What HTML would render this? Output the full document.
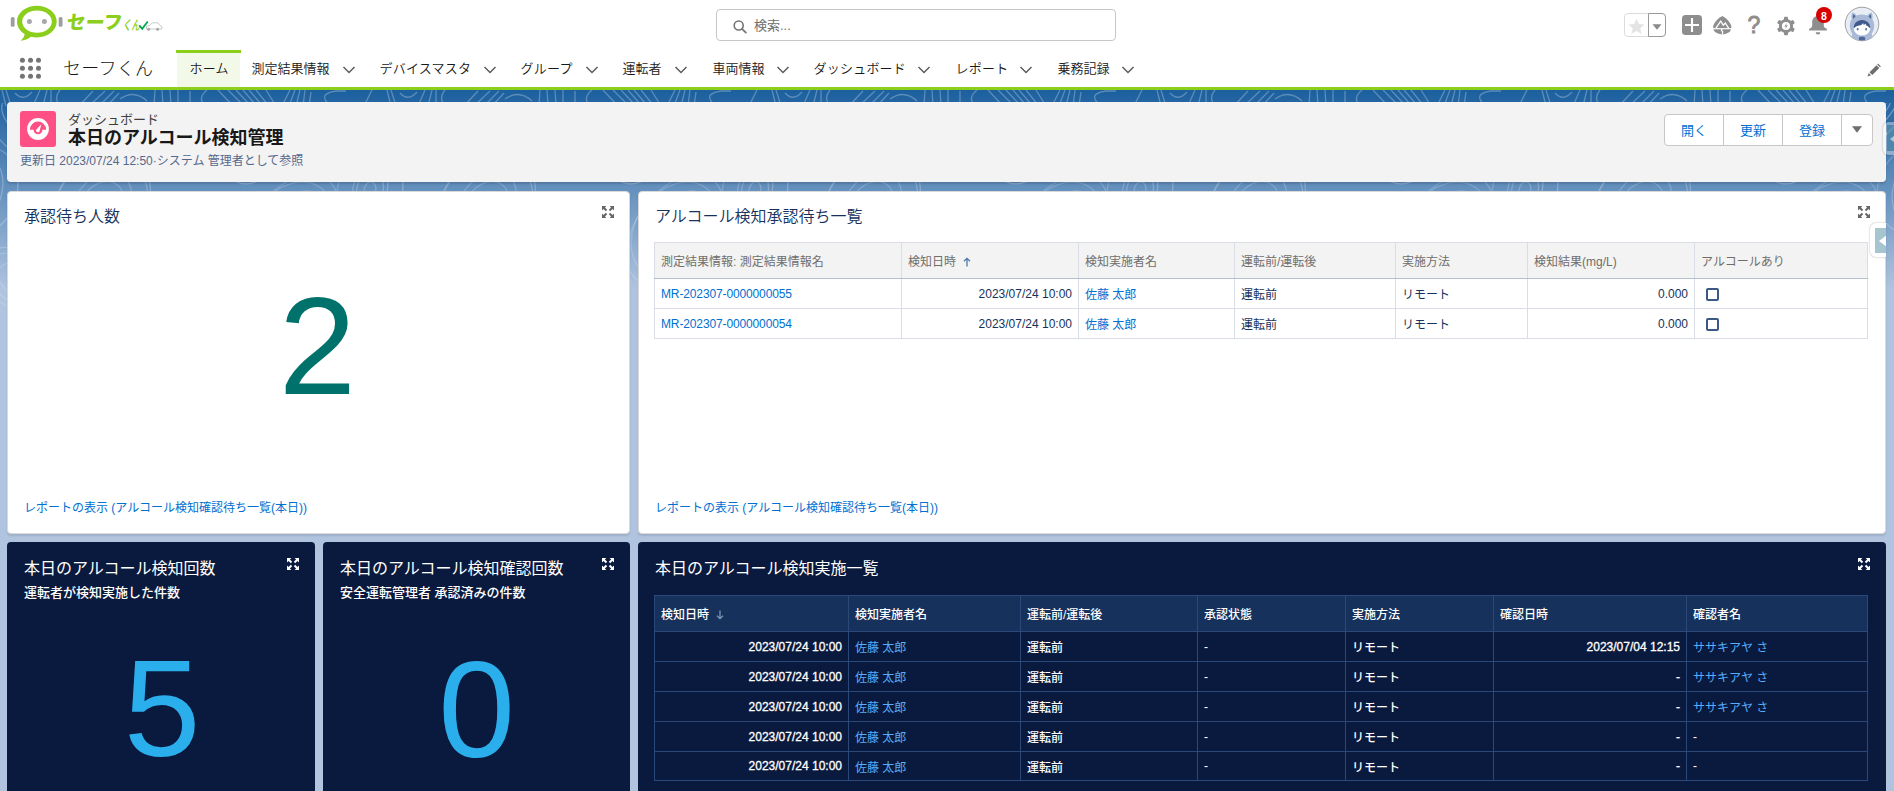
<!DOCTYPE html>
<html lang="ja">
<head>
<meta charset="utf-8">
<title>本日のアルコール検知管理</title>
<style>
*{box-sizing:border-box;margin:0;padding:0}
html,body{width:1894px;height:791px;overflow:hidden;background:#b0c4df}
body{font-family:"Liberation Sans","Noto Sans CJK JP",sans-serif;font-size:13px;color:#181818;position:relative}
.abs{position:absolute}
.t{position:absolute;white-space:nowrap;line-height:1}
#bg{position:absolute;left:0;top:90px;width:1894px;height:200px;background:linear-gradient(to top,rgba(176,196,223,0) 0,#1b5f9e 100%)}
#hdr{position:absolute;left:0;top:0;width:1894px;height:87px;background:#fff}
#gline{position:absolute;left:0;top:87px;width:1894px;height:3px;background:#8bcf1c}
.nav{font-size:13px;color:#181818;top:62px;font-weight:350;letter-spacing:.22px;margin-left:.5px}
.card{position:absolute;background:#fff;border-radius:4px;box-shadow:0 2px 2px rgba(0,0,0,.1)}
.dcard{position:absolute;background:#0a1a3e;border-radius:4px}
.ctitle{font-size:16px;color:#16325c;font-weight:350}
.dtitle{font-size:16px;color:#fff}
.dsub{font-size:13px;color:#fff;font-weight:500}
.link{color:#0070d2}
.foot{font-size:12px;color:#0070d2;margin-top:1px}
table{border-collapse:collapse;position:absolute;table-layout:fixed;font-size:12px}
td,th{border:1px solid #d8dde6;padding:0 6px;white-space:nowrap;overflow:hidden;text-align:left;font-weight:400;vertical-align:middle}
#t1 th{background:#f3f3f3;color:#706e6b;height:36px}
#t1 td{height:30px;color:#16325c}
#t1 th{border-bottom-color:#b3c1d3}
#t1 td.r,#t2 td.r{text-align:right}
#t1 a{color:#0070d2;text-decoration:none}
.mr{letter-spacing:-.13px}
#t2 tr:last-child td{height:29px}
#t2 td,#t2 th{border-color:#2a4878;color:#fff}
#t2 th{background:#16325c;height:36px;font-weight:500}
#t2 td{height:30px;font-weight:500}
#t2 a{color:#58aef8;text-decoration:none;font-weight:400}
#t2 td.r{-webkit-text-stroke:.3px #fff}
.cb{display:inline-block;width:13px;height:13px;border:2px solid #3a5a85;border-radius:2px;vertical-align:middle;margin-left:5px;background:#fff}
</style>
</head>
<body>
<div id="bg"></div>
<svg id="topo" class="abs" style="left:0;top:90px" width="1894" height="230" viewBox="0 0 1894 230">
<defs><linearGradient id="tg" x1="0" y1="0" x2="0" y2="230" gradientUnits="userSpaceOnUse"><stop offset="0" stop-color="#fff" stop-opacity=".32"/><stop offset=".5" stop-color="#fff" stop-opacity=".2"/><stop offset="1" stop-color="#fff" stop-opacity=".14"/></linearGradient>
<pattern id="tp" width="385" height="230" patternUnits="userSpaceOnUse"><clipPath id="tc"><rect x="0" y="13" width="385" height="217"/></clipPath><g clip-path="url(#tc)"><g fill="none" stroke="url(#tg)" stroke-width="1.300"><ellipse cx="-345.0" cy="30.0" rx="7.9" ry="4.5" transform="rotate(27 -345.0 30.0)"/><ellipse cx="40.0" cy="30.0" rx="7.9" ry="4.5" transform="rotate(27 40.0 30.0)"/><ellipse cx="425.0" cy="30.0" rx="7.9" ry="4.5" transform="rotate(27 425.0 30.0)"/><ellipse cx="-345.0" cy="30.0" rx="17.5" ry="11.2" transform="rotate(27 -345.0 30.0)"/><ellipse cx="40.0" cy="30.0" rx="17.5" ry="11.2" transform="rotate(27 40.0 30.0)"/><ellipse cx="425.0" cy="30.0" rx="17.5" ry="11.2" transform="rotate(27 425.0 30.0)"/><ellipse cx="-345.0" cy="30.0" rx="24.5" ry="16.6" transform="rotate(27 -345.0 30.0)"/><ellipse cx="40.0" cy="30.0" rx="24.5" ry="16.6" transform="rotate(27 40.0 30.0)"/><ellipse cx="425.0" cy="30.0" rx="24.5" ry="16.6" transform="rotate(27 425.0 30.0)"/><ellipse cx="-345.0" cy="30.0" rx="32.5" ry="21.4" transform="rotate(27 -345.0 30.0)"/><ellipse cx="40.0" cy="30.0" rx="32.5" ry="21.4" transform="rotate(27 40.0 30.0)"/><ellipse cx="425.0" cy="30.0" rx="32.5" ry="21.4" transform="rotate(27 425.0 30.0)"/><ellipse cx="-345.0" cy="30.0" rx="41.1" ry="23.5" transform="rotate(27 -345.0 30.0)"/><ellipse cx="40.0" cy="30.0" rx="41.1" ry="23.5" transform="rotate(27 40.0 30.0)"/><ellipse cx="425.0" cy="30.0" rx="41.1" ry="23.5" transform="rotate(27 425.0 30.0)"/><ellipse cx="-345.0" cy="30.0" rx="54.2" ry="41.0" transform="rotate(27 -345.0 30.0)"/><ellipse cx="40.0" cy="30.0" rx="54.2" ry="41.0" transform="rotate(27 40.0 30.0)"/><ellipse cx="425.0" cy="30.0" rx="54.2" ry="41.0" transform="rotate(27 425.0 30.0)"/><ellipse cx="-235.0" cy="-10.0" rx="6.7" ry="5.3" transform="rotate(40 -235.0 -10.0)"/><ellipse cx="150.0" cy="-10.0" rx="6.7" ry="5.3" transform="rotate(40 150.0 -10.0)"/><ellipse cx="535.0" cy="-10.0" rx="6.7" ry="5.3" transform="rotate(40 535.0 -10.0)"/><ellipse cx="-235.0" cy="-10.0" rx="15.3" ry="10.0" transform="rotate(40 -235.0 -10.0)"/><ellipse cx="150.0" cy="-10.0" rx="15.3" ry="10.0" transform="rotate(40 150.0 -10.0)"/><ellipse cx="535.0" cy="-10.0" rx="15.3" ry="10.0" transform="rotate(40 535.0 -10.0)"/><ellipse cx="-235.0" cy="-10.0" rx="25.8" ry="14.5" transform="rotate(40 -235.0 -10.0)"/><ellipse cx="150.0" cy="-10.0" rx="25.8" ry="14.5" transform="rotate(40 150.0 -10.0)"/><ellipse cx="535.0" cy="-10.0" rx="25.8" ry="14.5" transform="rotate(40 535.0 -10.0)"/><ellipse cx="-235.0" cy="-10.0" rx="34.5" ry="21.5" transform="rotate(40 -235.0 -10.0)"/><ellipse cx="150.0" cy="-10.0" rx="34.5" ry="21.5" transform="rotate(40 150.0 -10.0)"/><ellipse cx="535.0" cy="-10.0" rx="34.5" ry="21.5" transform="rotate(40 535.0 -10.0)"/><ellipse cx="-235.0" cy="-10.0" rx="36.9" ry="21.4" transform="rotate(40 -235.0 -10.0)"/><ellipse cx="150.0" cy="-10.0" rx="36.9" ry="21.4" transform="rotate(40 150.0 -10.0)"/><ellipse cx="535.0" cy="-10.0" rx="36.9" ry="21.4" transform="rotate(40 535.0 -10.0)"/><ellipse cx="-235.0" cy="-10.0" rx="46.4" ry="35.0" transform="rotate(40 -235.0 -10.0)"/><ellipse cx="150.0" cy="-10.0" rx="46.4" ry="35.0" transform="rotate(40 150.0 -10.0)"/><ellipse cx="535.0" cy="-10.0" rx="46.4" ry="35.0" transform="rotate(40 535.0 -10.0)"/><ellipse cx="-235.0" cy="-10.0" rx="52.5" ry="36.5" transform="rotate(40 -235.0 -10.0)"/><ellipse cx="150.0" cy="-10.0" rx="52.5" ry="36.5" transform="rotate(40 150.0 -10.0)"/><ellipse cx="535.0" cy="-10.0" rx="52.5" ry="36.5" transform="rotate(40 535.0 -10.0)"/><ellipse cx="-150.0" cy="45.0" rx="9.8" ry="5.6" transform="rotate(67 -150.0 45.0)"/><ellipse cx="235.0" cy="45.0" rx="9.8" ry="5.6" transform="rotate(67 235.0 45.0)"/><ellipse cx="620.0" cy="45.0" rx="9.8" ry="5.6" transform="rotate(67 620.0 45.0)"/><ellipse cx="-150.0" cy="45.0" rx="19.0" ry="11.4" transform="rotate(67 -150.0 45.0)"/><ellipse cx="235.0" cy="45.0" rx="19.0" ry="11.4" transform="rotate(67 235.0 45.0)"/><ellipse cx="620.0" cy="45.0" rx="19.0" ry="11.4" transform="rotate(67 620.0 45.0)"/><ellipse cx="-150.0" cy="45.0" rx="31.9" ry="21.0" transform="rotate(67 -150.0 45.0)"/><ellipse cx="235.0" cy="45.0" rx="31.9" ry="21.0" transform="rotate(67 235.0 45.0)"/><ellipse cx="620.0" cy="45.0" rx="31.9" ry="21.0" transform="rotate(67 620.0 45.0)"/><ellipse cx="-150.0" cy="45.0" rx="39.7" ry="27.6" transform="rotate(67 -150.0 45.0)"/><ellipse cx="235.0" cy="45.0" rx="39.7" ry="27.6" transform="rotate(67 235.0 45.0)"/><ellipse cx="620.0" cy="45.0" rx="39.7" ry="27.6" transform="rotate(67 620.0 45.0)"/><ellipse cx="-150.0" cy="45.0" rx="51.3" ry="32.0" transform="rotate(67 -150.0 45.0)"/><ellipse cx="235.0" cy="45.0" rx="51.3" ry="32.0" transform="rotate(67 235.0 45.0)"/><ellipse cx="620.0" cy="45.0" rx="51.3" ry="32.0" transform="rotate(67 620.0 45.0)"/><ellipse cx="-55.0" cy="10.0" rx="10.8" ry="7.5" transform="rotate(126 -55.0 10.0)"/><ellipse cx="330.0" cy="10.0" rx="10.8" ry="7.5" transform="rotate(126 330.0 10.0)"/><ellipse cx="715.0" cy="10.0" rx="10.8" ry="7.5" transform="rotate(126 715.0 10.0)"/><ellipse cx="-55.0" cy="10.0" rx="20.3" ry="15.6" transform="rotate(126 -55.0 10.0)"/><ellipse cx="330.0" cy="10.0" rx="20.3" ry="15.6" transform="rotate(126 330.0 10.0)"/><ellipse cx="715.0" cy="10.0" rx="20.3" ry="15.6" transform="rotate(126 715.0 10.0)"/><ellipse cx="-55.0" cy="10.0" rx="30.9" ry="19.2" transform="rotate(126 -55.0 10.0)"/><ellipse cx="330.0" cy="10.0" rx="30.9" ry="19.2" transform="rotate(126 330.0 10.0)"/><ellipse cx="715.0" cy="10.0" rx="30.9" ry="19.2" transform="rotate(126 715.0 10.0)"/><ellipse cx="-55.0" cy="10.0" rx="43.0" ry="24.9" transform="rotate(126 -55.0 10.0)"/><ellipse cx="330.0" cy="10.0" rx="43.0" ry="24.9" transform="rotate(126 330.0 10.0)"/><ellipse cx="715.0" cy="10.0" rx="43.0" ry="24.9" transform="rotate(126 715.0 10.0)"/><ellipse cx="-55.0" cy="10.0" rx="47.7" ry="35.3" transform="rotate(126 -55.0 10.0)"/><ellipse cx="330.0" cy="10.0" rx="47.7" ry="35.3" transform="rotate(126 330.0 10.0)"/><ellipse cx="715.0" cy="10.0" rx="47.7" ry="35.3" transform="rotate(126 715.0 10.0)"/><ellipse cx="-55.0" cy="10.0" rx="53.3" ry="35.8" transform="rotate(126 -55.0 10.0)"/><ellipse cx="330.0" cy="10.0" rx="53.3" ry="35.8" transform="rotate(126 330.0 10.0)"/><ellipse cx="715.0" cy="10.0" rx="53.3" ry="35.8" transform="rotate(126 715.0 10.0)"/><ellipse cx="-285.0" cy="120.0" rx="6.2" ry="4.3" transform="rotate(120 -285.0 120.0)"/><ellipse cx="100.0" cy="120.0" rx="6.2" ry="4.3" transform="rotate(120 100.0 120.0)"/><ellipse cx="485.0" cy="120.0" rx="6.2" ry="4.3" transform="rotate(120 485.0 120.0)"/><ellipse cx="-285.0" cy="120.0" rx="19.0" ry="12.0" transform="rotate(120 -285.0 120.0)"/><ellipse cx="100.0" cy="120.0" rx="19.0" ry="12.0" transform="rotate(120 100.0 120.0)"/><ellipse cx="485.0" cy="120.0" rx="19.0" ry="12.0" transform="rotate(120 485.0 120.0)"/><ellipse cx="-285.0" cy="120.0" rx="30.6" ry="21.4" transform="rotate(120 -285.0 120.0)"/><ellipse cx="100.0" cy="120.0" rx="30.6" ry="21.4" transform="rotate(120 100.0 120.0)"/><ellipse cx="485.0" cy="120.0" rx="30.6" ry="21.4" transform="rotate(120 485.0 120.0)"/><ellipse cx="-285.0" cy="120.0" rx="41.7" ry="27.7" transform="rotate(120 -285.0 120.0)"/><ellipse cx="100.0" cy="120.0" rx="41.7" ry="27.7" transform="rotate(120 100.0 120.0)"/><ellipse cx="485.0" cy="120.0" rx="41.7" ry="27.7" transform="rotate(120 485.0 120.0)"/><ellipse cx="-285.0" cy="120.0" rx="56.9" ry="44.8" transform="rotate(120 -285.0 120.0)"/><ellipse cx="100.0" cy="120.0" rx="56.9" ry="44.8" transform="rotate(120 100.0 120.0)"/><ellipse cx="485.0" cy="120.0" rx="56.9" ry="44.8" transform="rotate(120 485.0 120.0)"/><ellipse cx="-285.0" cy="120.0" rx="63.6" ry="45.5" transform="rotate(120 -285.0 120.0)"/><ellipse cx="100.0" cy="120.0" rx="63.6" ry="45.5" transform="rotate(120 100.0 120.0)"/><ellipse cx="485.0" cy="120.0" rx="63.6" ry="45.5" transform="rotate(120 485.0 120.0)"/><ellipse cx="-95.0" cy="140.0" rx="6.4" ry="5.1" transform="rotate(126 -95.0 140.0)"/><ellipse cx="290.0" cy="140.0" rx="6.4" ry="5.1" transform="rotate(126 290.0 140.0)"/><ellipse cx="675.0" cy="140.0" rx="6.4" ry="5.1" transform="rotate(126 675.0 140.0)"/><ellipse cx="-95.0" cy="140.0" rx="17.8" ry="11.1" transform="rotate(126 -95.0 140.0)"/><ellipse cx="290.0" cy="140.0" rx="17.8" ry="11.1" transform="rotate(126 290.0 140.0)"/><ellipse cx="675.0" cy="140.0" rx="17.8" ry="11.1" transform="rotate(126 675.0 140.0)"/><ellipse cx="-95.0" cy="140.0" rx="26.7" ry="19.1" transform="rotate(126 -95.0 140.0)"/><ellipse cx="290.0" cy="140.0" rx="26.7" ry="19.1" transform="rotate(126 290.0 140.0)"/><ellipse cx="675.0" cy="140.0" rx="26.7" ry="19.1" transform="rotate(126 675.0 140.0)"/><ellipse cx="-95.0" cy="140.0" rx="33.6" ry="22.3" transform="rotate(126 -95.0 140.0)"/><ellipse cx="290.0" cy="140.0" rx="33.6" ry="22.3" transform="rotate(126 290.0 140.0)"/><ellipse cx="675.0" cy="140.0" rx="33.6" ry="22.3" transform="rotate(126 675.0 140.0)"/><ellipse cx="-95.0" cy="140.0" rx="44.4" ry="25.7" transform="rotate(126 -95.0 140.0)"/><ellipse cx="290.0" cy="140.0" rx="44.4" ry="25.7" transform="rotate(126 290.0 140.0)"/><ellipse cx="675.0" cy="140.0" rx="44.4" ry="25.7" transform="rotate(126 675.0 140.0)"/><ellipse cx="-95.0" cy="140.0" rx="52.2" ry="38.8" transform="rotate(126 -95.0 140.0)"/><ellipse cx="290.0" cy="140.0" rx="52.2" ry="38.8" transform="rotate(126 290.0 140.0)"/><ellipse cx="675.0" cy="140.0" rx="52.2" ry="38.8" transform="rotate(126 675.0 140.0)"/><ellipse cx="-95.0" cy="140.0" rx="62.7" ry="38.4" transform="rotate(126 -95.0 140.0)"/><ellipse cx="290.0" cy="140.0" rx="62.7" ry="38.4" transform="rotate(126 290.0 140.0)"/><ellipse cx="675.0" cy="140.0" rx="62.7" ry="38.4" transform="rotate(126 675.0 140.0)"/><ellipse cx="-195.0" cy="200.0" rx="8.3" ry="5.5" transform="rotate(157 -195.0 200.0)"/><ellipse cx="190.0" cy="200.0" rx="8.3" ry="5.5" transform="rotate(157 190.0 200.0)"/><ellipse cx="575.0" cy="200.0" rx="8.3" ry="5.5" transform="rotate(157 575.0 200.0)"/><ellipse cx="-195.0" cy="200.0" rx="21.1" ry="16.3" transform="rotate(157 -195.0 200.0)"/><ellipse cx="190.0" cy="200.0" rx="21.1" ry="16.3" transform="rotate(157 190.0 200.0)"/><ellipse cx="575.0" cy="200.0" rx="21.1" ry="16.3" transform="rotate(157 575.0 200.0)"/><ellipse cx="-195.0" cy="200.0" rx="35.8" ry="27.5" transform="rotate(157 -195.0 200.0)"/><ellipse cx="190.0" cy="200.0" rx="35.8" ry="27.5" transform="rotate(157 190.0 200.0)"/><ellipse cx="575.0" cy="200.0" rx="35.8" ry="27.5" transform="rotate(157 575.0 200.0)"/><ellipse cx="-195.0" cy="200.0" rx="43.8" ry="28.6" transform="rotate(157 -195.0 200.0)"/><ellipse cx="190.0" cy="200.0" rx="43.8" ry="28.6" transform="rotate(157 190.0 200.0)"/><ellipse cx="575.0" cy="200.0" rx="43.8" ry="28.6" transform="rotate(157 575.0 200.0)"/><ellipse cx="-195.0" cy="200.0" rx="56.7" ry="43.7" transform="rotate(157 -195.0 200.0)"/><ellipse cx="190.0" cy="200.0" rx="56.7" ry="43.7" transform="rotate(157 190.0 200.0)"/><ellipse cx="575.0" cy="200.0" rx="56.7" ry="43.7" transform="rotate(157 575.0 200.0)"/><ellipse cx="-365.0" cy="190.0" rx="11.7" ry="7.1" transform="rotate(27 -365.0 190.0)"/><ellipse cx="20.0" cy="190.0" rx="11.7" ry="7.1" transform="rotate(27 20.0 190.0)"/><ellipse cx="405.0" cy="190.0" rx="11.7" ry="7.1" transform="rotate(27 405.0 190.0)"/><ellipse cx="-365.0" cy="190.0" rx="23.4" ry="15.7" transform="rotate(27 -365.0 190.0)"/><ellipse cx="20.0" cy="190.0" rx="23.4" ry="15.7" transform="rotate(27 20.0 190.0)"/><ellipse cx="405.0" cy="190.0" rx="23.4" ry="15.7" transform="rotate(27 405.0 190.0)"/><ellipse cx="-365.0" cy="190.0" rx="37.6" ry="23.1" transform="rotate(27 -365.0 190.0)"/><ellipse cx="20.0" cy="190.0" rx="37.6" ry="23.1" transform="rotate(27 20.0 190.0)"/><ellipse cx="405.0" cy="190.0" rx="37.6" ry="23.1" transform="rotate(27 405.0 190.0)"/><ellipse cx="-365.0" cy="190.0" rx="44.2" ry="28.9" transform="rotate(27 -365.0 190.0)"/><ellipse cx="20.0" cy="190.0" rx="44.2" ry="28.9" transform="rotate(27 20.0 190.0)"/><ellipse cx="405.0" cy="190.0" rx="44.2" ry="28.9" transform="rotate(27 405.0 190.0)"/><ellipse cx="-15.0" cy="100.0" rx="8.2" ry="5.9" transform="rotate(102 -15.0 100.0)"/><ellipse cx="370.0" cy="100.0" rx="8.2" ry="5.9" transform="rotate(102 370.0 100.0)"/><ellipse cx="755.0" cy="100.0" rx="8.2" ry="5.9" transform="rotate(102 755.0 100.0)"/><ellipse cx="-15.0" cy="100.0" rx="18.8" ry="13.2" transform="rotate(102 -15.0 100.0)"/><ellipse cx="370.0" cy="100.0" rx="18.8" ry="13.2" transform="rotate(102 370.0 100.0)"/><ellipse cx="755.0" cy="100.0" rx="18.8" ry="13.2" transform="rotate(102 755.0 100.0)"/><ellipse cx="-15.0" cy="100.0" rx="30.3" ry="17.1" transform="rotate(102 -15.0 100.0)"/><ellipse cx="370.0" cy="100.0" rx="30.3" ry="17.1" transform="rotate(102 370.0 100.0)"/><ellipse cx="755.0" cy="100.0" rx="30.3" ry="17.1" transform="rotate(102 755.0 100.0)"/><ellipse cx="-15.0" cy="100.0" rx="43.3" ry="32.3" transform="rotate(102 -15.0 100.0)"/><ellipse cx="370.0" cy="100.0" rx="43.3" ry="32.3" transform="rotate(102 370.0 100.0)"/><ellipse cx="755.0" cy="100.0" rx="43.3" ry="32.3" transform="rotate(102 755.0 100.0)"/></g></g><g fill="none" stroke="#fff" stroke-opacity=".27" stroke-width="1.300"><path d="M2 0L6 16"/><path d="M6 0L11 16"/><path d="M15 3Q23 12 32 2"/><path d="M33 16L40 0"/><path d="M43 16L47 0"/><path d="M51 0V16"/><path d="M60 0Q53 8 60 16"/><path d="M79 16L93 1"/><path d="M89 16L105 1"/><path d="M99 16L114 1"/><path d="M107 16L119 3"/><path d="M120 9Q134 -1 147 11"/><path d="M155 0L154 16"/><path d="M162 0L163 16"/><path d="M170 0L171 16"/><path d="M178 0L178 16"/><path d="M190 1L190 16"/><path d="M207 0Q197 8 205 16"/><path d="M218 0L233 16"/><path d="M228 0L242 14"/><path d="M236 0L249 14"/><path d="M243 0L255 14"/><path d="M249 0L261 14"/><path d="M256 0L268 15"/><path d="M266 0L276 16"/><path d="M282 16L290 0"/><path d="M289 16L295 0"/><path d="M296 16L300 0"/><path d="M303 16L305 0"/><path d="M309 16L311 2"/><path d="M331 16Q316 4 336 1H346"/><path d="M364 16L372 0"/></g></pattern></defs>
<rect width="1894" height="230" fill="url(#tp)"/></svg>
<div id="hdr"></div>
<div id="gline"></div>

<!-- GLOBAL HEADER -->
<svg id="logo" class="abs" style="left:0;top:0" width="180" height="48" viewBox="0 0 180 48">
<rect x="10.8" y="17" width="3.8" height="9.8" rx="1.6" fill="#9b9ea0"/>
<rect x="58.7" y="17" width="3.8" height="9.8" rx="1.6" fill="#9b9ea0"/>
<path d="M36.8 5.7c-11 0-19.8 7-19.8 15.8 0 5.200 3 9.700 7.700 12.600-.5 2.600-2 5-4 6.600 3.700-.3 7.400-1.700 10.300-3.900 1.800.4 3.800.6 5.800.6 11 0 19.900-7.100 19.900-15.900S47.800 5.700 36.800 5.700z" fill="#8bcf1c"/>
<ellipse cx="37" cy="21.600" rx="14.800" ry="11.100" fill="#fff"/>
<circle cx="29.400" cy="21.600" r="2.500" fill="#a6a8ab"/>
<circle cx="44.400" cy="21.600" r="2.500" fill="#a6a8ab"/>
<text x="66" y="29.400" font-family="'Liberation Sans','Noto Sans CJK JP',sans-serif" font-weight="900" font-size="19" fill="#8bcf1c" textLength="56" lengthAdjust="spacingAndGlyphs" transform="skewX(-6) translate(3 0)">セーフ</text>
<text x="122.500" y="30" font-family="'Liberation Sans','Noto Sans CJK JP',sans-serif" font-weight="500" font-size="13.500" fill="#8bcf1c" textLength="17.500" lengthAdjust="spacingAndGlyphs" font-style="italic">くん</text>
<path d="M139.200 25.300l3 3.600 5.600-7.400" fill="none" stroke="#00a651" stroke-width="1.800"/>
<path d="M146.500 29v-2.800l3.200-.6 2.600-2.800h5.600l2.200 2.800 1.700.8v2.600z" fill="#fff" stroke="#b9bbbd" stroke-width=".8"/>
<circle cx="148.600" cy="29.200" r="1.500" fill="#a6a8ab"/><circle cx="157.600" cy="29.200" r="1.500" fill="#a6a8ab"/>
</svg>
<div id="search" class="abs" style="left:716px;top:9px;width:400px;height:32px;border:1px solid #c9c7c5;border-radius:4px;background:#fff"></div>
<div class="t" style="left:754px;top:19px;font-size:13px;color:#706e6b">検索...</div>
<div id="gicons">
<svg class="abs" style="left:732px;top:19px" width="16" height="16" viewBox="0 0 16 16"><circle cx="6.700" cy="6.500" r="4.500" fill="none" stroke="#747474" stroke-width="1.600"/><path d="M10 9.800l3.900 3.900" stroke="#747474" stroke-width="1.700" stroke-linecap="round"/></svg>
<div class="abs" style="left:1624px;top:13px;width:42px;height:24px;border:1px solid #dddbda;border-radius:4px;background:#fff"></div>
<div class="abs" style="left:1648px;top:13px;width:18px;height:24px;border:1px solid #9a9a9a;border-radius:0 4px 4px 0;background:#fff"></div>
<svg class="abs" style="left:1627.500px;top:17.800px" width="17" height="17" viewBox="0 0 16 16"><path d="M8 .6l2.200 5.100 5.400.4-4.100 3.600 1.300 5.400L8 12.200l-4.800 2.900 1.300-5.400L.4 6.100l5.400-.4z" fill="#e4e4e4"/></svg>
<svg class="abs" style="left:1652px;top:24px" width="10" height="6" viewBox="0 0 10 6"><path d="M.5 .3h9L5 5.700z" fill="#8a8a8a"/></svg>
<svg class="abs" style="left:1682px;top:15px" width="20" height="20" viewBox="0 0 20 20"><rect width="20" height="20" rx="3.500" fill="#8e8e8e"/><path d="M10 3v14M3 10h14" stroke="#fff" stroke-width="2.100"/></svg>
<svg class="abs" style="left:1712px;top:15px" width="20" height="20" viewBox="0 0 20 20"><path d="M10.300 .9C13.500 2.500 17.500 6 19.200 10.500 19.600 13 18.800 15.500 17.500 17 15 18.800 12.500 19.300 10.300 19.300 8 19.300 5.500 18.800 3 17 1.700 15.500 .9 13 1.300 10.500 3 6 7 2.500 10.300 .9z" fill="#8e8e8e"/><path d="M0 13.700h20" stroke="#fff" stroke-width="1.200"/><path d="M3.900 13.200l4.800-7 2.600 4 2-2.200 3.300 5.200" fill="none" stroke="#fff" stroke-width="1.300" stroke-linejoin="miter"/><path d="M10.200 14l-.8 1.500 1.300 1.300-.3 2.500" fill="none" stroke="#fff" stroke-width="1.200"/></svg>
<div class="t" style="left:1747.600px;top:14px;font-size:23px;font-weight:400;-webkit-text-stroke:.9px #8e8e8e;color:#8e8e8e;font-family:'Liberation Sans',sans-serif">?</div>
<svg class="abs" style="left:1776px;top:16px" width="20" height="20" viewBox="0 0 20 20"><g fill="#8e8e8e"><rect x="8" y=".8" width="4" height="4.500" rx="1"/><rect x="8" y="14.700" width="4" height="4.500" rx="1"/><rect x="8" y=".8" width="4" height="4.500" rx="1" transform="rotate(60 10 10)"/><rect x="8" y=".8" width="4" height="4.500" rx="1" transform="rotate(120 10 10)"/><rect x="8" y=".8" width="4" height="4.500" rx="1" transform="rotate(240 10 10)"/><rect x="8" y=".8" width="4" height="4.500" rx="1" transform="rotate(300 10 10)"/></g><circle cx="10" cy="10" r="5.600" fill="none" stroke="#8e8e8e" stroke-width="3"/><path d="M11 6.800L8.300 10.500h1.800l-1 2.800 2.700-3.700H10z" fill="#8e8e8e"/></svg>
<svg class="abs" style="left:1808px;top:15px" width="20" height="20" viewBox="0 0 20 20"><path d="M10 1c-3.400 0-5.800 2.600-5.800 6v3.500c0 1.600-1 2.600-3.100 3.300v1.700h17.800v-1.700c-2.100-.7-3.100-1.700-3.100-3.300V7c0-3.400-2.400-6-5.800-6z" fill="#8e8e8e"/><path d="M7.700 17.200a2.300 2.300 0 0 0 4.600 0z" fill="#8e8e8e"/></svg>
<div class="abs" style="left:1816px;top:7px;width:16px;height:16px;border-radius:8px;background:#d80000"></div>
<div class="t" style="left:1816px;top:10.500px;width:16px;text-align:center;font-size:10.500px;font-weight:700;color:#fff">8</div>
<svg class="abs" style="left:1844px;top:5.800px" width="36" height="36" viewBox="0 0 36 36"><defs><clipPath id="avc"><circle cx="18" cy="18" r="16.600"/></clipPath></defs><circle cx="18" cy="18" r="16.800" fill="#e9edf5" stroke="#7a7a7a" stroke-width=".7"/><g clip-path="url(#avc)"><path d="M8.300 6.400c1.800.3 3.400 1.500 4.400 3.200 1.600-.8 3.400-1.200 5.300-1.200s3.700.4 5.300 1.200c1-1.700 2.600-2.900 4.400-3.200 1 2 1.200 4.300.6 6.500 1.200 1.900 1.900 4.200 1.900 6.700 0 3.500-1 6-2.500 8.200.8 2.500 1.200 5 1.200 8H7.100c0-3 .4-5.500 1.200-8-1.500-2.200-2.500-4.700-2.500-8.200 0-2.500.7-4.800 1.900-6.700-.6-2.200-.4-4.500.6-6.500z" fill="#a9bad9"/><path d="M9.200 8.300c1 .4 1.900 1.200 2.400 2.200-1 .7-1.900 1.600-2.600 2.600-.3-1.600-.3-3.300.2-4.800zM26.800 8.300c-1 .4-1.900 1.200-2.400 2.200 1 .7 1.900 1.600 2.600 2.600.3-1.600.3-3.300-.2-4.800z" fill="#51699a"/><ellipse cx="18" cy="22.300" rx="8.300" ry="7.200" fill="#fff"/><path d="M9.700 22.500c-.3-5 3.300-8.600 8.300-8.600s8.600 3.600 8.300 8.600c-1.400-1.600-2.800-2.700-4.500-3.300l.3-1.800-2.400 1.500-.6-1.900-1.700 2.100c-3 .3-5.700 1.400-7.700 3.400z" fill="#3f5a8c"/><ellipse cx="13.700" cy="23.200" rx=".9" ry="1.400" fill="#5a78ad"/><ellipse cx="22.100" cy="23.200" rx=".9" ry="1.400" fill="#5a78ad"/><ellipse cx="18" cy="32.800" rx="3.200" ry="2.200" fill="#51699a"/></g></svg>
</div>

<!-- NAV -->
<div id="navbar">
<svg class="abs" style="left:18px;top:56px" width="26" height="26" viewBox="0 0 26 26" fill="#747474"><circle cx="4.4" cy="4.3" r="2.5"/><circle cx="12.5" cy="4.3" r="2.5"/><circle cx="20.5" cy="4.3" r="2.5"/><circle cx="4.4" cy="12.3" r="2.5"/><circle cx="12.5" cy="12.3" r="2.5"/><circle cx="20.5" cy="12.3" r="2.5"/><circle cx="4.4" cy="20.2" r="2.5"/><circle cx="12.5" cy="20.2" r="2.5"/><circle cx="20.5" cy="20.2" r="2.5"/></svg>
<div class="t" style="left:63px;top:60.400px;font-size:18px;font-weight:300;color:#181818;letter-spacing:.3px">セーフくん</div>
<div class="abs" style="left:176px;top:50px;width:65px;height:3px;background:#8bcf1c"></div>
<div class="abs" style="left:177px;top:53px;width:63px;height:34px;background:#f3f9e8"></div>
<div class="t nav" style="left:189px">ホーム</div>
<div class="t nav" style="letter-spacing:0;left:251px">測定結果情報</div>
<svg class="abs" style="left:341px;top:65px;margin-left:1px" width="14" height="10" viewBox="0 0 14 10"><path d="M1.500 2l5.500 5.500L12.500 2" fill="none" stroke="#5c5c5c" stroke-width="1.500"/></svg>
<div class="t nav" style="left:379px">デバイスマスタ</div>
<svg class="abs" style="left:482px;top:65px;margin-left:1px" width="14" height="10" viewBox="0 0 14 10"><path d="M1.500 2l5.500 5.500L12.500 2" fill="none" stroke="#5c5c5c" stroke-width="1.500"/></svg>
<div class="t nav" style="left:520px">グループ</div>
<svg class="abs" style="left:584px;top:65px;margin-left:1px" width="14" height="10" viewBox="0 0 14 10"><path d="M1.500 2l5.500 5.500L12.500 2" fill="none" stroke="#5c5c5c" stroke-width="1.500"/></svg>
<div class="t nav" style="letter-spacing:0;left:622px">運転者</div>
<svg class="abs" style="left:673px;top:65px;margin-left:1px" width="14" height="10" viewBox="0 0 14 10"><path d="M1.500 2l5.500 5.500L12.500 2" fill="none" stroke="#5c5c5c" stroke-width="1.500"/></svg>
<div class="t nav" style="letter-spacing:0;left:712px">車両情報</div>
<svg class="abs" style="left:775px;top:65px;margin-left:1px" width="14" height="10" viewBox="0 0 14 10"><path d="M1.500 2l5.500 5.500L12.500 2" fill="none" stroke="#5c5c5c" stroke-width="1.500"/></svg>
<div class="t nav" style="left:813px">ダッシュボード</div>
<svg class="abs" style="left:916px;top:65px;margin-left:1px" width="14" height="10" viewBox="0 0 14 10"><path d="M1.500 2l5.500 5.500L12.500 2" fill="none" stroke="#5c5c5c" stroke-width="1.500"/></svg>
<div class="t nav" style="left:955px">レポート</div>
<svg class="abs" style="left:1018px;top:65px;margin-left:1px" width="14" height="10" viewBox="0 0 14 10"><path d="M1.500 2l5.500 5.500L12.500 2" fill="none" stroke="#5c5c5c" stroke-width="1.500"/></svg>
<div class="t nav" style="letter-spacing:0;left:1057px">乗務記録</div>
<svg class="abs" style="left:1120px;top:65px;margin-left:1px" width="14" height="10" viewBox="0 0 14 10"><path d="M1.500 2l5.500 5.500L12.500 2" fill="none" stroke="#5c5c5c" stroke-width="1.500"/></svg>
<svg class="abs" style="left:1867px;top:63px" width="14" height="14" viewBox="0 0 14 14"><path d="M.6 13.400l1.100-3.400 2.300 2.300z M2.500 9.200l7-7 2.800 2.800-7 7z M10.200 1.500l.9-.9 2.800 2.800-.9.900z" fill="#6e6e6e"/></svg>
</div>

<!-- PAGE HEADER -->
<div id="ph" class="abs" style="left:7px;top:102px;width:1879px;height:80px;background:#f3f3f3;border-radius:4px;box-shadow:0 2px 2px rgba(0,0,0,.15)"></div>
<div class="abs" style="left:20px;top:111px;width:36px;height:36px;border-radius:3px;background:#fe5085"></div>
<svg class="abs" style="left:26px;top:117px" width="24" height="24" viewBox="0 0 24 24"><circle cx="12" cy="12" r="10.900" fill="#fff"/><path d="M3.900 12.700a8.100 8.100 0 0 1 16.200 0z" fill="#fe5085"/><circle cx="12" cy="12.900" r="4.400" fill="#fe5085"/><path d="M15.300 7.200l-1.700 6.700a1.800 1.800 0 1 1-3.200-1.500z" fill="#fff"/></svg>
<div class="t" style="left:68px;top:113px;font-size:13px;color:#3e3e3c">ダッシュボード</div>
<div class="t" style="left:68px;top:129px;font-size:18px;font-weight:700;color:#181818">本日のアルコール検知管理</div>
<div class="t" style="left:20px;top:155px;font-size:12px;color:#54698d">更新日 2023/07/24 12:50·システム 管理者として参照</div>
<div class="abs" style="left:1664px;top:114px;width:209px;height:32px;border:1px solid #c9c7c5;border-radius:4px;background:#fff"></div>
<div class="abs" style="left:1723px;top:115px;width:1px;height:30px;background:#c9c7c5"></div>
<div class="abs" style="left:1782px;top:115px;width:1px;height:30px;background:#c9c7c5"></div>
<div class="abs" style="left:1841px;top:115px;width:1px;height:30px;background:#c9c7c5"></div>
<div class="t link" style="left:1681px;top:124px;font-size:13px">開く</div>
<div class="t link" style="left:1740px;top:124px;font-size:13px">更新</div>
<div class="t link" style="left:1799px;top:124px;font-size:13px">登録</div>
<svg class="abs" style="left:1852px;top:126px" width="10" height="7" viewBox="0 0 10 7"><path d="M0 .3h10L5 6.800z" fill="#706e6b"/></svg>

<!-- CARDS -->
<div class="card" style="left:7px;top:191px;width:623px;height:343px;border:1px solid #d9d9d9"></div>
<div class="t ctitle" style="left:24px;top:209px">承認待ち人数</div>
<svg class="abs" style="left:602px;top:206px" width="12" height="12" viewBox="0 0 12 12" fill="#666"><path d="M0 0h4.400L2.900 1.500l2.300 2.300-1.400 1.400-2.300-2.300L0 4.400z M12 0v4.400L10.500 2.900 8.200 5.200 6.800 3.800l2.300-2.300L7.600 0z M0 12V7.600l1.500 1.500 2.300-2.300 1.400 1.400-2.300 2.300L4.400 12z M12 12H7.600l1.500-1.500-2.300-2.300 1.400-1.400 2.300 2.300L12 7.600z"/></svg>
<div class="t" id="n2" style="left:6.800px;width:621px;text-align:center;top:276px;font-size:139px;color:#00716b;font-family:'Liberation Sans',sans-serif">2</div>
<div class="t foot" style="left:24px;top:501px">レポートの表示 (アルコール検知確認待ち一覧(本日))</div>

<div class="card" style="left:638px;top:191px;width:1248px;height:343px;border:1px solid #d9d9d9"></div>
<div class="t ctitle" style="left:655px;top:209px">アルコール検知承認待ち一覧</div>
<svg class="abs" style="left:1858px;top:206px" width="12" height="12" viewBox="0 0 12 12" fill="#666"><path d="M0 0h4.400L2.900 1.500l2.300 2.300-1.400 1.400-2.300-2.300L0 4.400z M12 0v4.400L10.500 2.900 8.200 5.200 6.800 3.800l2.300-2.300L7.600 0z M0 12V7.600l1.500 1.500 2.300-2.300 1.400 1.400-2.300 2.300L4.400 12z M12 12H7.600l1.500-1.500-2.300-2.300 1.400-1.400 2.300 2.300L12 7.600z"/></svg>
<table id="t1" style="left:654px;top:242px;width:1213px">
<colgroup><col style="width:247px"><col style="width:177px"><col style="width:156px"><col style="width:161px"><col style="width:132px"><col style="width:167px"><col style="width:173px"></colgroup>
<tr><th>測定結果情報: 測定結果情報名</th><th>検知日時 <svg width="8" height="10" viewBox="0 0 8 10" style="margin-left:4px;vertical-align:-1px"><path d="M4 9.500V1.500M1 4.300l3-3 3 3" fill="none" stroke="#4a78b0" stroke-width="1.300"/></svg></th><th>検知実施者名</th><th>運転前/運転後</th><th>実施方法</th><th>検知結果(mg/L)</th><th>アルコールあり</th></tr>
<tr><td class="mr"><a>MR-202307-0000000055</a></td><td class="r">2023/07/24 10:00</td><td><a>佐藤 太郎</a></td><td>運転前</td><td>リモート</td><td class="r">0.000</td><td><span class="cb"></span></td></tr>
<tr><td class="mr"><a>MR-202307-0000000054</a></td><td class="r">2023/07/24 10:00</td><td><a>佐藤 太郎</a></td><td>運転前</td><td>リモート</td><td class="r">0.000</td><td><span class="cb"></span></td></tr>
</table>
<div class="t foot" style="left:655px;top:501px">レポートの表示 (アルコール検知確認待ち一覧(本日))</div>

<div class="dcard" style="left:7px;top:542px;width:308px;height:260px"></div>
<div class="t dtitle" style="left:24px;top:561px">本日のアルコール検知回数</div>
<div class="t dsub" style="left:24px;top:586px">運転者が検知実施した件数</div>
<svg class="abs" style="left:287px;top:558px" width="12" height="12" viewBox="0 0 12 12" fill="#fff"><path d="M0 0h4.400L2.900 1.500l2.300 2.300-1.400 1.400-2.300-2.300L0 4.400z M12 0v4.400L10.500 2.900 8.200 5.200 6.800 3.800l2.300-2.300L7.600 0z M0 12V7.600l1.500 1.500 2.300-2.300 1.400 1.400-2.300 2.300L4.400 12z M12 12H7.600l1.500-1.500-2.300-2.300 1.400-1.400 2.300 2.300L12 7.600z"/></svg>
<div class="t" id="n5" style="left:8px;width:308px;text-align:center;top:639px;font-size:138px;color:#2aafec;font-family:'Liberation Sans',sans-serif">5</div>

<div class="dcard" style="left:323px;top:542px;width:307px;height:260px"></div>
<div class="t dtitle" style="left:340px;top:561px">本日のアルコール検知確認回数</div>
<div class="t dsub" style="left:340px;top:586px">安全運転管理者 承認済みの件数</div>
<svg class="abs" style="left:602px;top:558px" width="12" height="12" viewBox="0 0 12 12" fill="#fff"><path d="M0 0h4.400L2.900 1.500l2.300 2.300-1.400 1.400-2.300-2.300L0 4.400z M12 0v4.400L10.500 2.900 8.200 5.200 6.800 3.800l2.300-2.300L7.600 0z M0 12V7.600l1.500 1.500 2.300-2.300 1.400 1.400-2.300 2.300L4.400 12z M12 12H7.600l1.500-1.500-2.300-2.300 1.400-1.400 2.300 2.300L12 7.600z"/></svg>
<div class="t" id="n0" style="left:323px;width:307px;text-align:center;top:639.500px;font-size:138px;color:#2aafec;font-family:'Liberation Sans',sans-serif">0</div>

<div class="dcard" style="left:638px;top:542px;width:1248px;height:260px"></div>
<div class="t dtitle" style="left:655px;top:561px">本日のアルコール検知実施一覧</div>
<svg class="abs" style="left:1858px;top:558px" width="12" height="12" viewBox="0 0 12 12" fill="#fff"><path d="M0 0h4.400L2.900 1.500l2.300 2.300-1.400 1.400-2.300-2.300L0 4.400z M12 0v4.400L10.500 2.900 8.200 5.200 6.800 3.800l2.300-2.300L7.600 0z M0 12V7.600l1.500 1.500 2.300-2.300 1.400 1.400-2.300 2.300L4.400 12z M12 12H7.600l1.500-1.500-2.300-2.300 1.400-1.400 2.300 2.300L12 7.600z"/></svg>
<table id="t2" style="left:654px;top:595px;width:1213px">
<colgroup><col style="width:194px"><col style="width:172px"><col style="width:177px"><col style="width:148px"><col style="width:148px"><col style="width:193px"><col style="width:181px"></colgroup>
<tr><th>検知日時 <svg width="8" height="10" viewBox="0 0 8 10" style="margin-left:4px;vertical-align:-1px"><path d="M4 .5v8M1 5.700l3 3 3-3" fill="none" stroke="#7f93b5" stroke-width="1.300"/></svg></th><th>検知実施者名</th><th>運転前/運転後</th><th>承認状態</th><th>実施方法</th><th>確認日時</th><th>確認者名</th></tr>
<tr><td class="r">2023/07/24 10:00</td><td><a>佐藤 太郎</a></td><td>運転前</td><td>-</td><td>リモート</td><td class="r">2023/07/04 12:15</td><td><a>ササキアヤ さ</a></td></tr>
<tr><td class="r">2023/07/24 10:00</td><td><a>佐藤 太郎</a></td><td>運転前</td><td>-</td><td>リモート</td><td class="r">-</td><td><a>ササキアヤ さ</a></td></tr>
<tr><td class="r">2023/07/24 10:00</td><td><a>佐藤 太郎</a></td><td>運転前</td><td>-</td><td>リモート</td><td class="r">-</td><td><a>ササキアヤ さ</a></td></tr>
<tr><td class="r">2023/07/24 10:00</td><td><a>佐藤 太郎</a></td><td>運転前</td><td>-</td><td>リモート</td><td class="r">-</td><td>-</td></tr>
<tr><td class="r">2023/07/24 10:00</td><td><a>佐藤 太郎</a></td><td>運転前</td><td>-</td><td>リモート</td><td class="r">-</td><td>-</td></tr>
</table>


<!-- side widgets -->
<div class="abs" style="left:1883px;top:122px;width:30px;height:33px;border-radius:6px;background:rgba(255,255,255,.38);box-shadow:0 0 2px rgba(0,0,0,.35)"><div class="abs" style="left:4px;top:3px;width:26px;height:26px;background:rgba(40,110,150,.6)"></div><svg class="abs" style="left:7px;top:11px" width="8" height="12" viewBox="0 0 8 12"><path d="M0 6l8-6v12z" fill="#fff" fill-opacity=".55"/></svg></div>
<div class="abs" style="left:1866px;top:220px;width:20px;height:42px;overflow:hidden"><div class="abs" style="left:4px;top:3px;width:30px;height:34px;border-radius:6px;background:#fff;box-shadow:0 0 2px rgba(0,0,0,.35)"><div class="abs" style="left:5px;top:5px;width:25px;height:25px;background:#a7c5cf"></div><svg class="abs" style="left:9px;top:12px" width="8" height="12" viewBox="0 0 8 12"><path d="M0 6l8-6v12z" fill="#fff"/></svg></div></div>
</body>
</html>
